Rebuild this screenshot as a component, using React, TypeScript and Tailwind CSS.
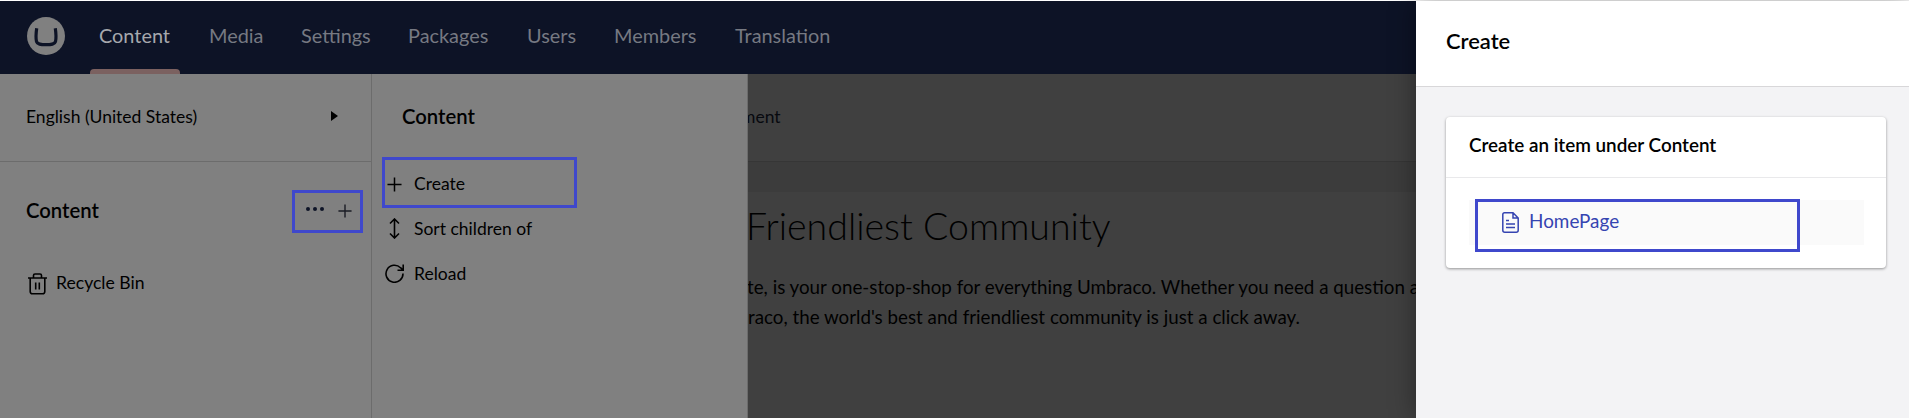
import React from "react";

const Box = ({ className }: { className: string }) => (
  <div className={`absolute border-3 border-[#3f48cc] ${className}`} />
);

const tabs = [
  { label: "Media", cls: "ml-[38px] w-[54px]" },
  { label: "Settings", cls: "ml-[38px] w-[70px]" },
  { label: "Packages", cls: "ml-[37px] w-[81px]" },
  { label: "Users", cls: "ml-[38px] w-[49px]" },
  { label: "Members", cls: "ml-[38px] w-[83px]" },
  { label: "Translation", cls: "ml-[38px] w-[96px]" },
];

const Plus = ({ className }: { className: string }) => (
  <svg className={className} viewBox="0 0 16 16" fill="none" stroke="currentColor" strokeWidth="1.6">
    <path d="M8 0.5V15.5M0.5 8H15.5" />
  </svg>
);

export default function App() {
  return (
    <div className="relative h-[418px] w-[1909px] overflow-hidden bg-white pt-px font-['Lato',sans-serif] text-[17.5px] leading-6 text-black">
      <div className="flex h-[417px]">
        <div className="flex w-[1416px] flex-none flex-col overflow-hidden">
          <header className="flex h-[73px] flex-none items-center bg-[#0d1326] pl-[27px] text-[19.9px] text-[#767982]">
            <svg className="mt-[-3px] h-[38px] w-[38px] flex-none" viewBox="0 0 38 38">
              <circle cx="19" cy="19" r="19" fill="#808080" />
              <path d="M9.700 11.200C9 16 8.600 20.500 9.500 24.500c.8 3 4 3.200 9.500 3.200s8.700-.2 9.500-3.200c.9-4 .5-8.500-.2-13.300" fill="none" stroke="#0d1326" strokeWidth="3.200" />
            </svg>
            <div className="relative ml-[34px] flex h-full w-[72px] items-center pb-[5px] text-[#a6a8ad]">
              <span className="whitespace-nowrap">Content</span>
              <span className="absolute bottom-0 left-[-9px] h-[5px] w-[90px] rounded-t-[4px] bg-[#7b6160]" />
            </div>
            {tabs.map((t) => (
              <span key={t.label} className={`flex-none whitespace-nowrap pb-[5px] ${t.cls}`}>{t.label}</span>
            ))}
          </header>
          <div className="flex flex-1">
            <aside className="w-[372px] flex-none border-r border-[#6c6c6c] bg-[#808080]">
              <div className="flex h-[88px] items-center justify-between border-b border-[#6c6c6c] pb-[3px] pl-[26px] pr-[33px]">
                <span className="pt-[2px]">English (United States)</span>
                <svg className="h-[10px] w-[7px]" viewBox="0 0 7 10"><path d="M0 0L7 5L0 10Z" /></svg>
              </div>
              <div className="flex h-[98px] items-center pl-[26px] pr-[19px]">
                <span className="flex-1 pb-[2px] text-[20.3px] font-semibold">Content</span>
                <svg className="mt-[-4px] h-[4px] w-[18px]" viewBox="0 0 18 4" fill="#0d1326"><circle cx="2" cy="2" r="2" /><circle cx="9" cy="2" r="2" /><circle cx="16" cy="2" r="2" /></svg>
                <Plus className="ml-[14px] h-[14px] w-[14px] text-[#1a1c24]" />
              </div>
              <div className="flex h-[45px] items-center pl-[28px]">
                <svg className="mt-[2px] h-[22px] w-[19px]" viewBox="0 0 19 22" fill="none" stroke="black" strokeWidth="1.6">
                  <path d="M0 5H19M2.200 5V18.500Q2.200 20.800 4.500 20.800H14.500Q16.800 20.800 16.800 18.500V5M5.500 5V2.500Q5.500 1 7 1H12Q13.500 1 13.500 2.500V5M7.700 9.500V16.500M11.300 9.500V16.500" />
                </svg>
                <span className="ml-[9px] pt-px text-[17.6px]">Recycle Bin</span>
              </div>
            </aside>
            <section className="w-[376px] flex-none border-r border-[#6c6c6c] bg-[#808080]">
              <h2 className="flex h-[87px] items-center pb-[3px] pl-[30px] text-[20.3px] font-semibold">Content</h2>
              <div className="flex flex-col">
                <div className="flex h-[45px] items-center pl-[15px]"><Plus className="mt-px h-[15px] w-[15px]" /><span className="ml-[12px] pt-px">Create</span></div>
                <div className="flex h-[45px] items-center pl-[17px]">
                  <svg className="h-[21px] w-[11px]" viewBox="0 0 11 21" fill="none" stroke="black" strokeWidth="1.6"><path d="M5.500 1V20M1 5.500L5.500 1L10 5.500M1 15.500L5.500 20L10 15.500" /></svg>
                  <span className="ml-[14px] pt-px">Sort children of</span>
                </div>
                <div className="flex h-[45px] items-center pl-[13px]">
                  <svg className="h-[19px] w-[19px]" viewBox="0 0 19 19" fill="none" stroke="black" strokeWidth="1.6"><path d="M18 9.500A8.500 8.500 0 1 1 15.500 3.700L18 6M18.200 0.500V6.200H12.500" /></svg>
                  <span className="ml-[10px] pt-px">Reload</span>
                </div>
              </div>
            </section>
            <main className="flex flex-1 flex-col overflow-hidden bg-[#404040]">
              <div className="flex h-[88px] flex-none items-center border-b border-[#363636] pb-[2px] text-[#07090f]"><span className="ml-[-7px]">ment</span></div>
              <div className="h-[30px] flex-none bg-[#3c3c3c]" />
              <h1 className="ml-[-2px] mt-[9px] whitespace-nowrap text-[37.5px] font-light leading-[50px]">Friendliest Community</h1>
              <div className="mt-[21px] whitespace-nowrap text-[18.75px] leading-[30px]">
                <p className="ml-[-1px]">te, is your one-stop-shop for everything Umbraco. Whether you need a question a</p>
                <p>raco, the world's best and friendliest community is just a click away.</p>
              </div>
            </main>
          </div>
        </div>
        <aside className="relative flex w-[493px] flex-none flex-col bg-[#f3f3f5] shadow-[0_0_25px_rgba(0,0,0,0.4)]">
          <h2 className="flex h-[86px] items-center border-b border-[#d8d7d9] bg-white pb-[6px] pl-[30px] text-[21.9px] font-semibold">Create</h2>
          <div className="ml-[30px] mt-[30px] h-[151px] w-[440px] rounded-[4px] bg-white shadow-[0_1px_3px_rgba(0,0,0,0.4)]">
            <h3 className="flex h-[61px] items-center border-b border-[#e9e9eb] pb-[4px] pl-[23px] text-[18.85px] font-semibold">Create an item under Content</h3>
            <div className="ml-[23px] mt-[22px] flex h-[45px] w-[395px] items-center bg-[#fafafa] pl-[33px] text-[#3544b1]">
              <svg className="h-[21px] w-[17px]" viewBox="0 0 17 21" fill="none" stroke="currentColor" strokeWidth="1.5"><path d="M2.500 0.800H11L16.200 6V18.200Q16.200 20.200 14.200 20.200H2.800Q0.800 20.200 0.800 18.200V2.500Q0.800 0.800 2.500 0.800ZM11 0.800V6H16.200M4 8.500H7M4 12H13M4 15.500H13" /></svg>
              <span className="ml-[10px] pb-[4px] text-[18.9px]">HomePage</span>
            </div>
          </div>
        </aside>
      </div>
      <Box className="left-[292px] top-[190px] h-[43px] w-[71px]" />
      <Box className="left-[382px] top-[157px] h-[51px] w-[195px]" />
      <Box className="left-[1475px] top-[199px] h-[53px] w-[325px]" />
    </div>
  );
}
